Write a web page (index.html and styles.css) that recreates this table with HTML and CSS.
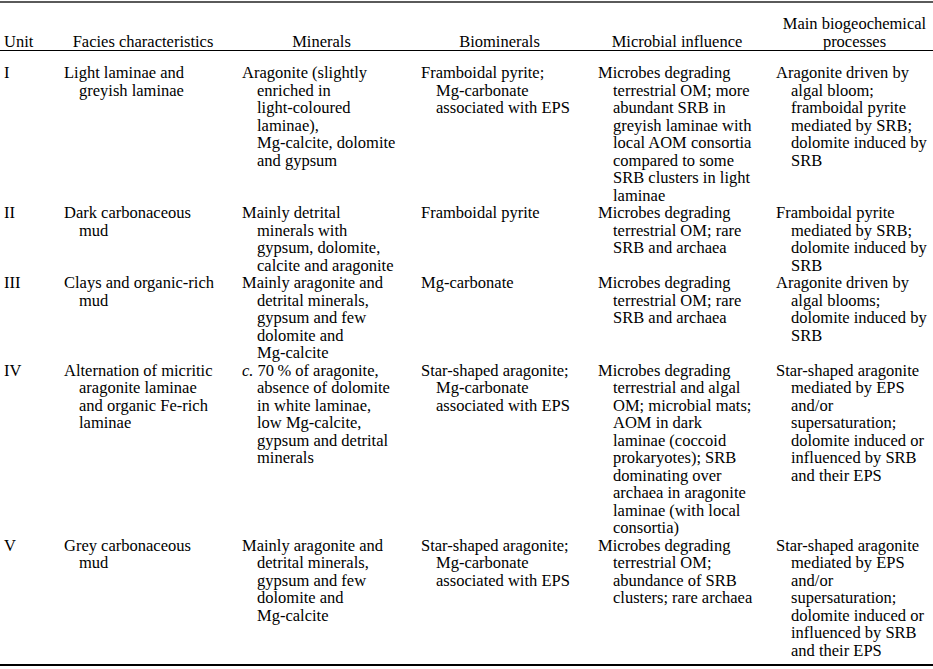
FILE: index.html
```html
<!DOCTYPE html>
<html lang="en">
<head>
<meta charset="utf-8">
<title>Facies table</title>
<link rel="stylesheet" href="styles.css">
</head>
<body>
<div class="tbl">
  <div class="row head">
    <div class="h unit">Unit</div>
    <div class="h">Facies characteristics</div>
    <div class="h">Minerals</div>
    <div class="h">Biominerals</div>
    <div class="h">Microbial influence</div>
    <div class="h last">Main biogeochemical<br>processes</div>
  </div>
  <div class="body">
    <div class="row">
      <div class="c unit">I</div>
      <div class="c">Light laminae and<br>greyish laminae</div>
      <div class="c">Aragonite (slightly<br>enriched in<br>light-coloured<br>laminae),<br>Mg-calcite, dolomite<br>and gypsum</div>
      <div class="c">Framboidal pyrite;<br>Mg-carbonate<br>associated with EPS</div>
      <div class="c">Microbes degrading<br>terrestrial OM; more<br>abundant SRB in<br>greyish laminae with<br>local AOM consortia<br>compared to some<br>SRB clusters in light<br>laminae</div>
      <div class="c">Aragonite driven by<br>algal bloom;<br>framboidal pyrite<br>mediated by SRB;<br>dolomite induced by<br>SRB</div>
    </div>
    <div class="row">
      <div class="c unit">II</div>
      <div class="c">Dark carbonaceous<br>mud</div>
      <div class="c">Mainly detrital<br>minerals with<br>gypsum, dolomite,<br>calcite and aragonite</div>
      <div class="c">Framboidal pyrite</div>
      <div class="c">Microbes degrading<br>terrestrial OM; rare<br>SRB and archaea</div>
      <div class="c">Framboidal pyrite<br>mediated by SRB;<br>dolomite induced by<br>SRB</div>
    </div>
    <div class="row">
      <div class="c unit">III</div>
      <div class="c">Clays and organic-rich<br>mud</div>
      <div class="c">Mainly aragonite and<br>detrital minerals,<br>gypsum and few<br>dolomite and<br>Mg-calcite</div>
      <div class="c">Mg-carbonate</div>
      <div class="c">Microbes degrading<br>terrestrial OM; rare<br>SRB and archaea</div>
      <div class="c">Aragonite driven by<br>algal blooms;<br>dolomite induced by<br>SRB</div>
    </div>
    <div class="row">
      <div class="c unit">IV</div>
      <div class="c">Alternation of micritic<br>aragonite laminae<br>and organic Fe-rich<br>laminae</div>
      <div class="c"><i>c.</i> 70&#8201;% of aragonite,<br>absence of dolomite<br>in white laminae,<br>low Mg-calcite,<br>gypsum and detrital<br>minerals</div>
      <div class="c">Star-shaped aragonite;<br>Mg-carbonate<br>associated with EPS</div>
      <div class="c">Microbes degrading<br>terrestrial and algal<br>OM; microbial mats;<br>AOM in dark<br>laminae (coccoid<br>prokaryotes); SRB<br>dominating over<br>archaea in aragonite<br>laminae (with local<br>consortia)</div>
      <div class="c">Star-shaped aragonite<br>mediated by EPS<br>and/or<br>supersaturation;<br>dolomite induced or<br>influenced by SRB<br>and their EPS</div>
    </div>
    <div class="row">
      <div class="c unit">V</div>
      <div class="c">Grey carbonaceous<br>mud</div>
      <div class="c">Mainly aragonite and<br>detrital minerals,<br>gypsum and few<br>dolomite and<br>Mg-calcite</div>
      <div class="c">Star-shaped aragonite;<br>Mg-carbonate<br>associated with EPS</div>
      <div class="c">Microbes degrading<br>terrestrial OM;<br>abundance of SRB<br>clusters; rare archaea</div>
      <div class="c">Star-shaped aragonite<br>mediated by EPS<br>and/or<br>supersaturation;<br>dolomite induced or<br>influenced by SRB<br>and their EPS</div>
    </div>
  </div>
</div>
</body>
</html>
```
FILE: styles.css
```css
html, body {
  margin: 0;
  padding: 0;
  background: #ffffff;
}

body {
  color: #000000;
  font-family: "Liberation Serif", "Times New Roman", serif;
  font-size: 16.5px;
  line-height: 17.5px;
}

.tbl {
  margin-top: 1px;
  width: 933px;
  border-top: 2px solid #5a5a5a;
  border-bottom: 2px solid #000000;
}

.row {
  display: grid;
  grid-template-columns: 64px 178px 179px 177px 178px 157px;
}

.head {
  padding-top: 12px;
  border-bottom: 1.5px solid #000000;
}

.body {
  padding: 13px 0 5px;
}

.h {
  align-self: end;
  text-align: center;
  padding-right: 20px;
  white-space: nowrap;
}

.h.last {
  padding-right: 0;
}

.h.unit {
  text-align: left;
  padding-left: 4px;
  padding-right: 0;
}

.c {
  white-space: nowrap;
  padding-left: 15px;
  text-indent: -15px;
}

.c.unit {
  padding-left: 4px;
  text-indent: 0;
}
```
